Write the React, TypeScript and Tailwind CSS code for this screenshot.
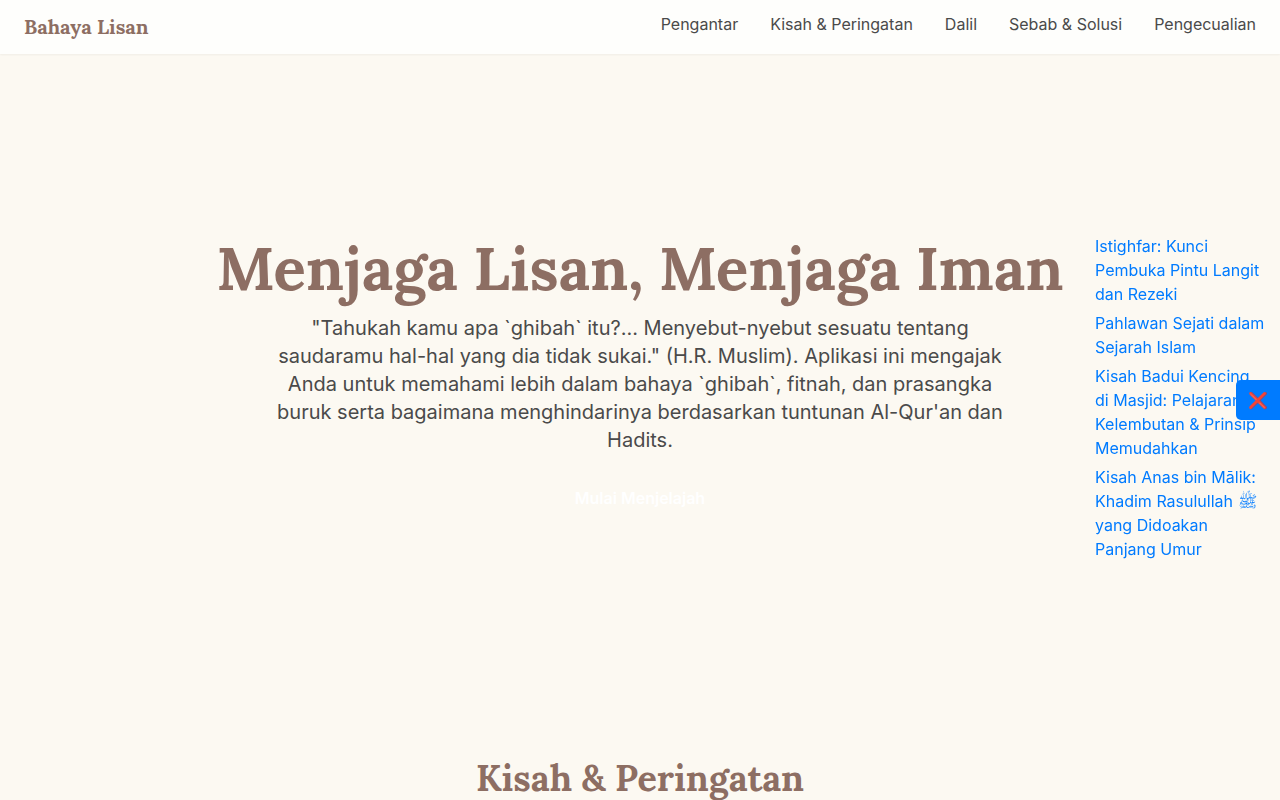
const nav = [
  ["Pengantar", "#pengantar"],
  ["Kisah & Peringatan", "#kisah"],
  ["Dalil", "#dalil"],
  ["Sebab & Solusi", "#sebab"],
  ["Pengecualian", "#pengecualian"],
];

const articles = [
  "Istighfar: Kunci Pembuka Pintu Langit dan Rezeki",
  "Pahlawan Sejati dalam Sejarah Islam",
  "Kisah Badui Kencing di Masjid: Pelajaran Kelembutan & Prinsip Memudahkan",
  "Kisah Anas bin Mālik: Khadim Rasulullah ﷺ yang Didoakan Panjang Umur",
];

export default function App() {
  return (
    <div className="min-h-screen bg-[#fcf9f2] font-['Inter',sans-serif] text-[#4a4a4a]">
      <header className="bg-white/80 shadow-xs">
        <nav className="flex items-start justify-between px-6 py-3">
          <a href="#top" className="font-['Lora','Noto_Serif',serif] text-xl leading-[30px] font-bold text-[#8d6e63]">
            Bahaya Lisan
          </a>
          <div className="flex gap-8">
            {nav.map(([label, href]) => (
              <a key={href} href={href}>{label}</a>
            ))}
          </div>
        </nav>
      </header>
      <main>
        <section id="pengantar" className="flex flex-col items-center px-6 pt-46 text-center">
          <h1 className="font-['Lora','Noto_Serif',serif] text-6xl leading-none font-bold text-[#8d6e63]">
            Menjaga Lisan, Menjaga Iman
          </h1>
          <p className="mt-4 max-w-[750px] text-xl leading-7">
            "Tahukah kamu apa `ghibah` itu?... Menyebut-nyebut sesuatu tentang saudaramu hal-hal yang dia tidak sukai." (H.R. Muslim). Aplikasi ini mengajak Anda untuk memahami lebih dalam bahaya `ghibah`, fitnah, dan prasangka buruk serta bagaimana menghindarinya berdasarkan tuntunan Al-Qur'an dan Hadits.
          </p>
          <a href="#kisah" className="mt-8 font-semibold text-white">Mulai Menjelajah</a>
        </section>
        <section id="kisah" className="px-6 pt-62 text-center">
          <h2 className="font-['Lora','Noto_Serif',serif] text-4xl font-bold text-[#8d6e63]">Kisah & Peringatan</h2>
        </section>
      </main>
      <aside className="fixed top-[234px] right-0 w-[200px] px-[15px]">
        <ul className="flex flex-col gap-[5px]">
          {articles.map((title) => (
            <li key={title}><a href="#kisah" className="text-[#007bff]">{title}</a></li>
          ))}
        </ul>
      </aside>
      <button aria-label="Tutup" className="fixed top-[380px] right-0 h-10 w-11 rounded-l-[5px] bg-[#007bff]">❌</button>
    </div>
  );
}
